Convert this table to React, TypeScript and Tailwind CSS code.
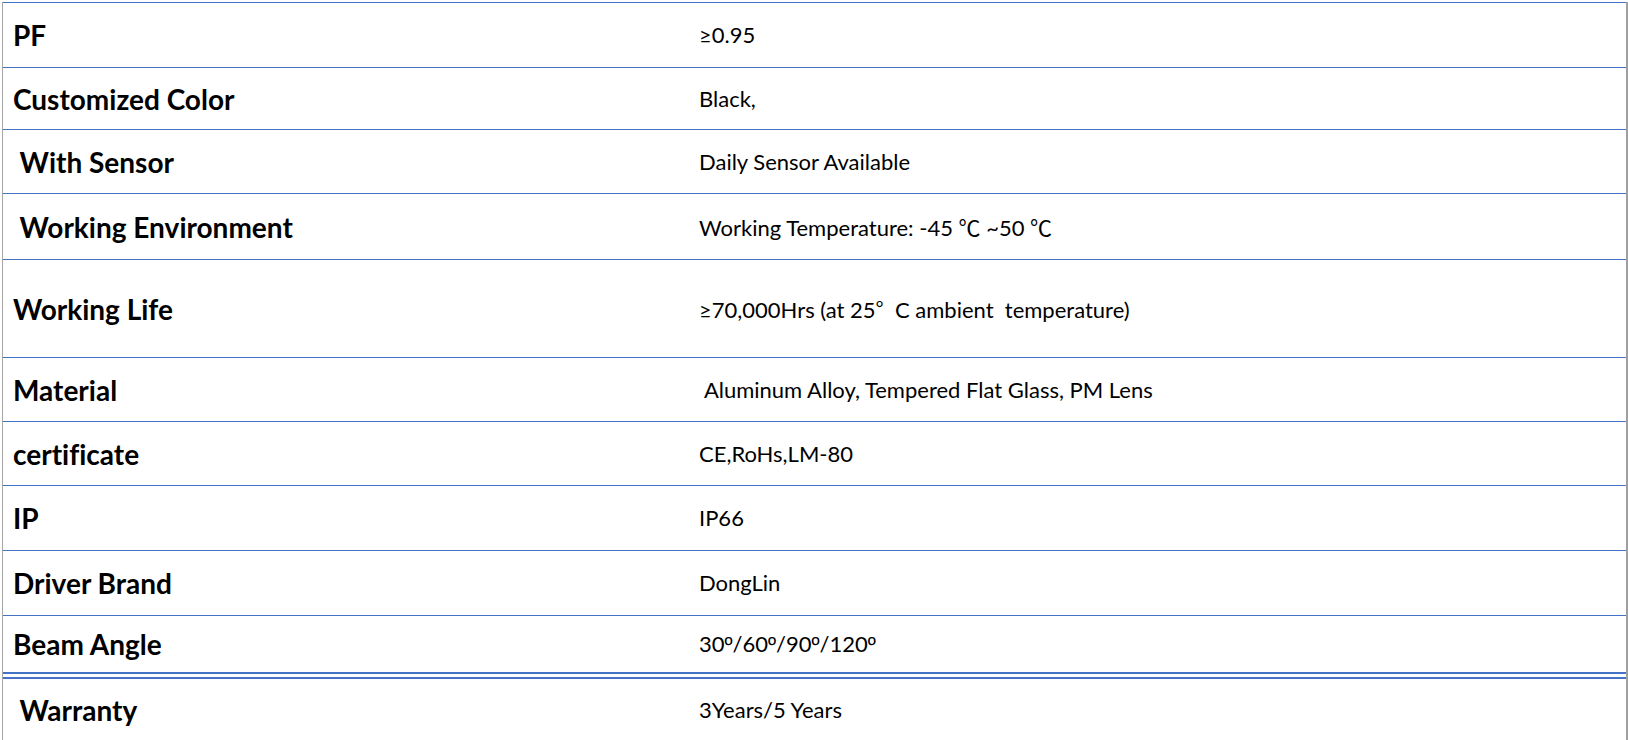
const cjk = "font-['Noto_Sans_CJK_SC',sans-serif]";
const ord = "font-['Liberation_Sans',sans-serif]";

const specs = [
  { label: "PF", value: <>≥0.95</>, h: "h-[65px]" },
  { label: "Customized Color", value: <>Black,</>, h: "h-[62px]" },
  { label: " With Sensor", value: <>Daily Sensor Available</>, h: "h-[64px]" },
  {
    label: " Working Environment",
    value: (
      <>
        Working Temperature: -45 <span className={cjk}>℃</span> ~50 <span className={cjk}>℃</span>
      </>
    ),
    h: "h-[66px]"
  },
  {
    label: "Working Life",
    value: (
      <>
        ≥70,000Hrs (at 25<span className={cjk}>°</span>  C ambient  temperature)
      </>
    ),
    h: "h-[98px]"
  },
  { label: "Material", value: <> Aluminum Alloy, Tempered Flat Glass, PM Lens</>, h: "h-[64px]" },
  { label: "certificate", value: <>CE,RoHs,LM-80</>, h: "h-[64px]" },
  { label: "IP", value: <>IP66</>, h: "h-[65px]" },
  { label: "Driver Brand", value: <>DongLin</>, h: "h-[65px]" },
  {
    label: "Beam Angle",
    value: (
      <>
        30<span className={ord}>º</span>/60<span className={ord}>º</span>/90<span className={ord}>º</span>/120
        <span className={ord}>º</span>
      </>
    ),
    h: "h-[57px]"
  }
];

export default function App() {
  return (
    <div className="h-[740px] w-[1628px] overflow-hidden bg-white pt-[2px]">
      <div className="ml-[2px] h-full border-l border-r-2 border-l-[#a6a6a6] border-r-[#a0a0a0] font-['Lato',sans-serif] text-black [font-variant-ligatures:none]">
        {specs.map((row) => (
          <div
            key={row.label}
            className={`grid grid-cols-[686px_1fr] items-center border-t border-[#4472c4] ${row.h}`}
          >
            <div className="whitespace-pre pl-[10px] text-[28px] leading-none font-bold">{row.label}</div>
            <div className="whitespace-pre pl-[10px] text-[22px] leading-none">{row.value}</div>
          </div>
        ))}
        <div className="grid h-[68px] grid-cols-[686px_1fr] items-center border-t-[7px] border-double border-[#4472c4]">
          <div className="whitespace-pre pl-[10px] text-[28px] leading-none font-bold"> Warranty</div>
          <div className="whitespace-pre pl-[10px] text-[22px] leading-none">3Years/5 Years</div>
        </div>
      </div>
    </div>
  );
}
